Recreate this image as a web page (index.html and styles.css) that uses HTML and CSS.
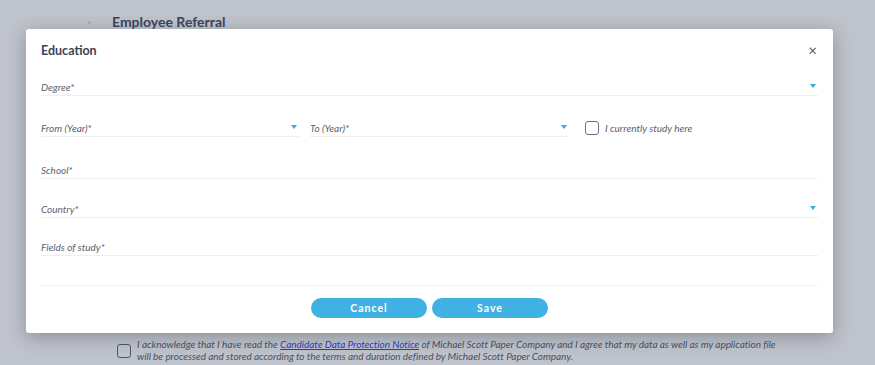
FILE: index.html
```html
<!DOCTYPE html>
<html lang="en">

<head>
  <meta charset="UTF-8">
  <meta name="viewport" content="width=device-width, initial-scale=1.0">
  <title>Employee Referral</title>
  <link rel="stylesheet" href="styles.css">
</head>

<body>

  <div class="page">
    <div class="page-head">
      <span class="dot"></span>
      <h1>Employee Referral</h1>
    </div>

    <div class="consent">
      <span class="box"></span>
      <p>
        I acknowledge that I have read the <a href="#">Candidate Data Protection Notice</a> of Michael Scott Paper Company and I agree that my data as well as my application file
        will be processed and stored according to the terms and duration defined by Michael Scott Paper Company.
      </p>
    </div>
  </div>

  <div class="modal">
    <div class="modal-head">
      <h2>Education</h2>
      <span class="close">&times;</span>
    </div>

    <div class="field degree">
      <label>Degree*</label>
      <span class="caret"></span>
    </div>

    <div class="year-row">
      <div class="field">
        <label>From (Year)*</label>
        <span class="caret"></span>
      </div>
      <div class="field">
        <label>To (Year)*</label>
        <span class="caret"></span>
      </div>
      <div class="check">
        <span class="box"></span>
        <span>I currently study here</span>
      </div>
    </div>

    <div class="field school">
      <label>School*</label>
    </div>

    <div class="field country">
      <label>Country*</label>
      <span class="caret"></span>
    </div>

    <div class="field study">
      <label>Fields of study*</label>
    </div>

    <div class="divider"></div>

    <div class="actions">
      <button class="btn">Cancel</button>
      <button class="btn">Save</button>
    </div>
  </div>

</body>

</html>
```

FILE: styles.css
```css
body {
  margin: 0;
  height: 365px;
  overflow: hidden;
  background: #bfc3cb;
  font-family: Lato, "Noto Sans", sans-serif;
  color: #3b4560;
}

.page {
  height: 365px;
  display: flex;
  flex-direction: column;
  justify-content: space-between;
}

.page-head {
  display: flex;
  align-items: center;
  padding: 12px 0 0 88px;
}

.dot {
  width: 3px;
  height: 3px;
  border-radius: 50%;
  background: #a3a8b2;
  margin-right: 21px;
}

h1 {
  margin: 0;
  font-size: 14px;
  line-height: 20px;
  font-weight: 700;
  color: #3a4560;
}

.consent {
  display: flex;
  align-items: flex-start;
  padding: 0 0 3px 117px;
}

.consent .box {
  margin-top: 6px;
  margin-right: 6px;
  border-color: #4d5466;
}

.consent p {
  margin: 0;
  width: 650px;
  font-size: 10px;
  line-height: 12px;
  letter-spacing: -0.05px;
  font-style: italic;
  color: #4a5163;
}

.consent a {
  color: #2b38c9;
}

.box {
  flex: none;
  width: 12px;
  height: 12px;
  border: 1.5px solid #6a7181;
  border-radius: 3px;
}

/* dialog over the page */
.modal {
  position: absolute;
  left: 26px;
  top: 29px;
  width: 807px;
  height: 304px;
  box-sizing: border-box;
  padding: 0 15px;
  background: #fff;
  border-radius: 3px;
  box-shadow: 0 4px 18px rgba(40, 45, 60, 0.35);
}

.modal-head {
  height: 42px;
  display: flex;
  align-items: center;
  justify-content: space-between;
}

h2 {
  margin: 0;
  font-size: 12.5px;
  font-weight: 700;
  color: #3a4458;
}

.close {
  font-size: 15px;
  color: #555d6c;
  margin-right: 1px;
}

.field {
  height: 16px;
  display: flex;
  align-items: center;
  justify-content: space-between;
  border-bottom: 1px solid #efeff2;
}

.field label {
  font-size: 10px;
  font-style: italic;
  color: #5b6272;
}

.caret {
  width: 0;
  height: 0;
  border-left: 3.5px solid transparent;
  border-right: 3.5px solid transparent;
  border-top: 4px solid #3aa9de;
  margin-right: 2px;
  margin-top: -3px;
}

.degree {
  margin-top: 8px;
}

.year-row {
  margin-top: 24px;
  display: grid;
  grid-template-columns: 258px 259px 1fr;
  column-gap: 11px;
  align-items: center;
}

.check {
  display: flex;
  align-items: center;
  margin-left: 5px;
  margin-top: -2px;
  font-size: 10px;
  font-style: italic;
  color: #5b6272;
}

.check .box {
  margin-right: 6px;
}

.school {
  margin-top: 25px;
}

.country {
  margin-top: 22px;
}

.study {
  margin-top: 21px;
}

.divider {
  margin-top: 29px;
  height: 1px;
  background: #f1f1f3;
}

.actions {
  margin-top: 12px;
  display: flex;
  justify-content: center;
  gap: 5px;
}

.btn {
  width: 116px;
  height: 20px;
  border: none;
  border-radius: 10px;
  background: #3fb2e3;
  color: #fff;
  font-family: inherit;
  font-size: 10.5px;
  font-weight: 700;
  letter-spacing: 1px;
}
```
